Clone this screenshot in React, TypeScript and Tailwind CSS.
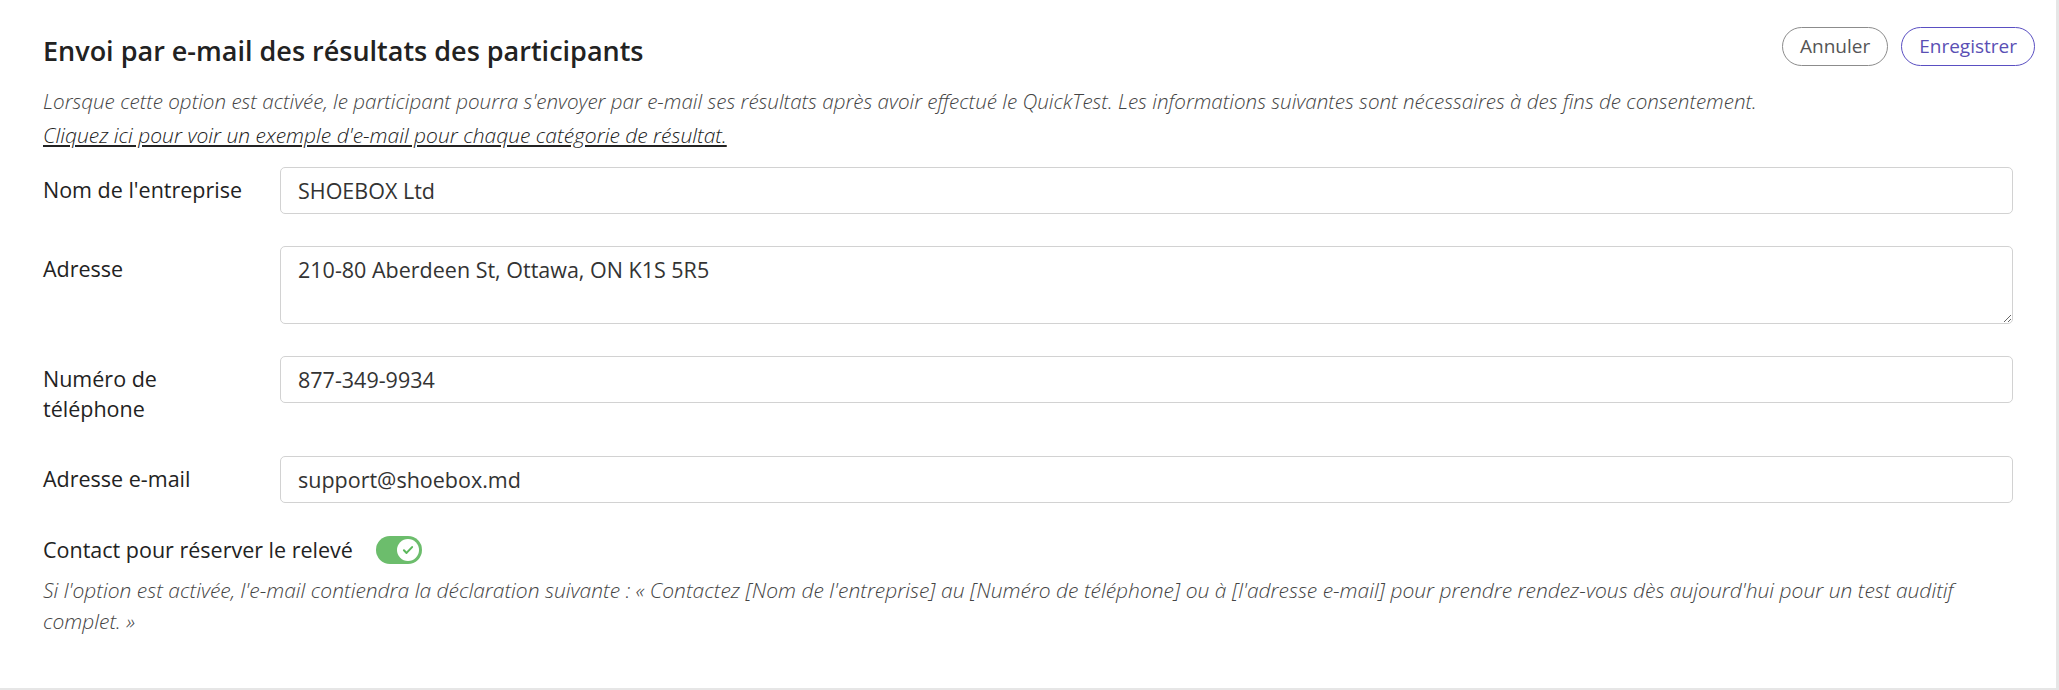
import { useState } from 'react';

const FONT = "font-['Open_Sans',sans-serif]";

function Field({ label, value, multiline }: { label: string; value: string; multiline?: boolean }) {
  return (
    <div className="flex items-start">
      <label className="w-[237px] shrink-0 pr-[26px] pt-[8px] text-[21.5px] leading-[30px] text-[#222]">{label}</label>
      {multiline ? (
        <textarea
          defaultValue={value}
          className="h-[78px] flex-1 resize-y rounded-[5px] border border-[#d2d2d2] bg-white px-[17px] pt-[8px] text-[21.5px] leading-[30px] text-[#333] outline-none"
        />
      ) : (
        <input
          defaultValue={value}
          className="h-[47px] flex-1 rounded-[5px] border border-[#d2d2d2] bg-white px-[17px] text-[21.5px] text-[#333] outline-none"
        />
      )}
    </div>
  );
}

export default function App() {
  const [enabled, setEnabled] = useState(true);

  return (
    <div className={`flex h-[690px] w-full bg-[#e6e6e6] pr-[3px] pb-[2px] ${FONT}`}>
      <div className="flex-1 bg-white pl-[43px] pr-[43px] pt-[27px]">
        {/* ── Header ─────────────────────────────────────────── */}
        <div className="-mr-[22px] flex items-start justify-between">
          <h2 className="mt-[6px] text-[27px] font-semibold leading-[36px] text-[#222]">
            Envoi par e-mail des résultats des participants
          </h2>
          <div className="flex gap-[13px]">
            <button className="h-[39px] rounded-full border border-[#8c8c8c] px-[17px] text-[19px] text-[#555]">
              Annuler
            </button>
            <button className="h-[39px] rounded-full border border-[#5a4fc2] px-[17px] text-[19px] text-[#5a4fb4]">
              Enregistrer
            </button>
          </div>
        </div>

        <p className="mt-[17px] text-[20.6px] font-light italic leading-[30px] text-[#444]">
          Lorsque cette option est activée, le participant pourra s'envoyer par e-mail ses résultats après avoir effectué le QuickTest. Les informations suivantes sont nécessaires à des fins de consentement.
        </p>
        <a href="#" className="mt-[4px] block w-fit text-[21px] font-light italic leading-[30px] text-[#222] underline">
          Cliquez ici pour voir un exemple d'e-mail pour chaque catégorie de résultat.
        </a>

        {/* ── Fields ─────────────────────────────────────────── */}
        <div className="mt-[17px] flex flex-col gap-[32px]">
          <Field label="Nom de l'entreprise" value="SHOEBOX Ltd" />
          <Field label="Adresse" value="210-80 Aberdeen St, Ottawa, ON K1S 5R5" multiline />
          <Field label="Numéro de téléphone" value="877-349-9934" />
          <Field label="Adresse e-mail" value="support@shoebox.md" />
        </div>

        {/* ── Toggle ─────────────────────────────────────────── */}
        <div className="mt-[32px] flex items-center gap-[23px]">
          <span className="text-[21.5px] leading-[30px] text-[#222]">Contact pour réserver le relevé</span>
          <button
            onClick={() => setEnabled(!enabled)}
            className={`flex h-[28px] w-[46px] items-center rounded-full px-[3px] ${enabled ? 'justify-end bg-[#6cbd6c]' : 'justify-start bg-gray-300'}`}
          >
            <span className="flex h-[22px] w-[22px] items-center justify-center rounded-full bg-white">
              {enabled && (
                <svg className="h-[14px] w-[14px]" viewBox="0 0 24 24" fill="none" stroke="#5cb85c" strokeWidth={3.5} strokeLinecap="round" strokeLinejoin="round">
                  <path d="M5 12.5l4.5 4.5L19 7" />
                </svg>
              )}
            </span>
          </button>
        </div>
        <p className="mt-[10px] text-[21px] font-light italic leading-[31px] text-[#444]">
          Si l'option est activée, l'e-mail contiendra la déclaration suivante : « Contactez [Nom de l'entreprise] au [Numéro de téléphone] ou à [l'adresse e-mail] pour prendre rendez-vous dès aujourd'hui pour un test auditif complet. »
        </p>
      </div>
    </div>
  );
}
